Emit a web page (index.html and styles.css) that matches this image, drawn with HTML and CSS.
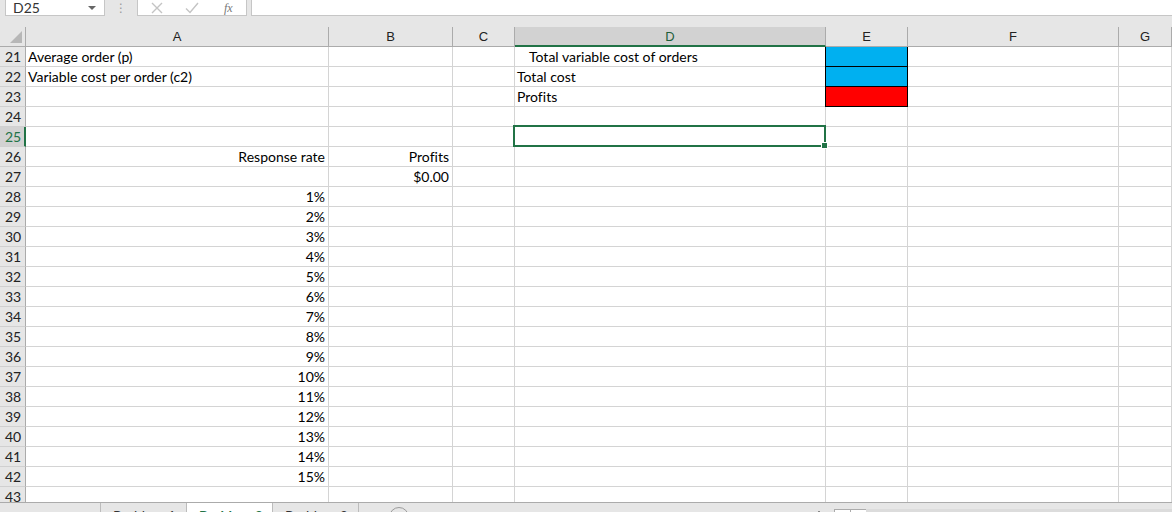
FILE: index.html
```html
<!DOCTYPE html>
<html>
<head>
<meta charset="utf-8">
<link rel="stylesheet" href="styles.css">
</head>
<body>
<div class="app">
  <div class="fbar">
    <div class="namebox"><span>D25</span><span class="caret"></span></div>
    <div class="dots">⋮</div>
    <div class="btnbox">
      <svg class="ic cancel" width="12" height="12" viewBox="0 0 12 12"><path d="M1 1 L11 11 M11 1 L1 11" stroke="#c4c4c4" stroke-width="1.4" fill="none"/></svg>
      <svg class="ic enter" width="14" height="12" viewBox="0 0 14 12"><path d="M1 6.5 L5 10.5 L13 1" stroke="#c4c4c4" stroke-width="1.4" fill="none"/></svg>
      <span class="fx">fx</span>
    </div>
    <div class="finput"></div>
  </div>
  <div class="sheet">
    <div class="grid">
      <div class="corner"><span class="tri"></span></div>
      <div class="ch">A</div><div class="ch">B</div><div class="ch">C</div><div class="ch sel">D</div><div class="ch">E</div><div class="ch">F</div><div class="ch">G</div>

      <div class="rh">21</div><div class="c">Average order (p)</div><div class="c"></div><div class="c"></div><div class="c ind">Total variable cost of orders</div><div class="c blue"></div><div class="c"></div><div class="c"></div>
      <div class="rh">22</div><div class="c">Variable cost per order (c2)</div><div class="c"></div><div class="c"></div><div class="c">Total cost</div><div class="c blue"></div><div class="c"></div><div class="c"></div>
      <div class="rh">23</div><div class="c"></div><div class="c"></div><div class="c"></div><div class="c">Profits</div><div class="c red"></div><div class="c"></div><div class="c"></div>
      <div class="rh">24</div><div class="c"></div><div class="c"></div><div class="c"></div><div class="c"></div><div class="c"></div><div class="c"></div><div class="c"></div>
      <div class="rh sel">25</div><div class="c"></div><div class="c"></div><div class="c"></div><div class="c active"></div><div class="c"></div><div class="c"></div><div class="c"></div>
      <div class="rh">26</div><div class="c r">Response rate</div><div class="c r">Profits</div><div class="c"></div><div class="c"></div><div class="c"></div><div class="c"></div><div class="c"></div>
      <div class="rh">27</div><div class="c"></div><div class="c r">$0.00</div><div class="c"></div><div class="c"></div><div class="c"></div><div class="c"></div><div class="c"></div>
      <div class="rh">28</div><div class="c r">1%</div><div class="c"></div><div class="c"></div><div class="c"></div><div class="c"></div><div class="c"></div><div class="c"></div>
      <div class="rh">29</div><div class="c r">2%</div><div class="c"></div><div class="c"></div><div class="c"></div><div class="c"></div><div class="c"></div><div class="c"></div>
      <div class="rh">30</div><div class="c r">3%</div><div class="c"></div><div class="c"></div><div class="c"></div><div class="c"></div><div class="c"></div><div class="c"></div>
      <div class="rh">31</div><div class="c r">4%</div><div class="c"></div><div class="c"></div><div class="c"></div><div class="c"></div><div class="c"></div><div class="c"></div>
      <div class="rh">32</div><div class="c r">5%</div><div class="c"></div><div class="c"></div><div class="c"></div><div class="c"></div><div class="c"></div><div class="c"></div>
      <div class="rh">33</div><div class="c r">6%</div><div class="c"></div><div class="c"></div><div class="c"></div><div class="c"></div><div class="c"></div><div class="c"></div>
      <div class="rh">34</div><div class="c r">7%</div><div class="c"></div><div class="c"></div><div class="c"></div><div class="c"></div><div class="c"></div><div class="c"></div>
      <div class="rh">35</div><div class="c r">8%</div><div class="c"></div><div class="c"></div><div class="c"></div><div class="c"></div><div class="c"></div><div class="c"></div>
      <div class="rh">36</div><div class="c r">9%</div><div class="c"></div><div class="c"></div><div class="c"></div><div class="c"></div><div class="c"></div><div class="c"></div>
      <div class="rh">37</div><div class="c r">10%</div><div class="c"></div><div class="c"></div><div class="c"></div><div class="c"></div><div class="c"></div><div class="c"></div>
      <div class="rh">38</div><div class="c r">11%</div><div class="c"></div><div class="c"></div><div class="c"></div><div class="c"></div><div class="c"></div><div class="c"></div>
      <div class="rh">39</div><div class="c r">12%</div><div class="c"></div><div class="c"></div><div class="c"></div><div class="c"></div><div class="c"></div><div class="c"></div>
      <div class="rh">40</div><div class="c r">13%</div><div class="c"></div><div class="c"></div><div class="c"></div><div class="c"></div><div class="c"></div><div class="c"></div>
      <div class="rh">41</div><div class="c r">14%</div><div class="c"></div><div class="c"></div><div class="c"></div><div class="c"></div><div class="c"></div><div class="c"></div>
      <div class="rh">42</div><div class="c r">15%</div><div class="c"></div><div class="c"></div><div class="c"></div><div class="c"></div><div class="c"></div><div class="c"></div>
      <div class="rh">43</div><div class="c"></div><div class="c"></div><div class="c"></div><div class="c"></div><div class="c"></div><div class="c"></div><div class="c"></div>
    </div>
  </div>
  <div class="tabbar">
    <div class="nav"></div>
    <div class="tab">Problem 1</div>
    <div class="tab on">Problem 2</div>
    <div class="tab">Problem 3</div>
    <div class="add"></div>
    <div class="spacer"></div>
    <div class="hdots"></div>
    <div class="sbtn"></div>
    <div class="sbtn"></div>
    <div class="track"></div>
  </div>
</div>
</body>
</html>
```
FILE: styles.css
```css
html, body {
  margin: 0;
  padding: 0;
  width: 1172px;
  height: 512px;
  overflow: hidden;
  background: #ffffff;
}
.app {
  width: 1172px;
  height: 512px;
  display: flex;
  flex-direction: column;
  font-family: "Lato", "Liberation Sans", sans-serif;
  font-variant-ligatures: none;
  color: #000;
}
.fbar {
  height: 27px;
  flex: none;
  background: #e6e6e6;
  display: flex;
  align-items: flex-start;
}
.namebox {
  margin-left: 5px;
  margin-top: -1px;
  width: 100px;
  height: 17px;
  border: 1px solid #c6c6c6;
  background: #fff;
  box-sizing: border-box;
  display: flex;
  align-items: center;
  justify-content: space-between;
  padding: 0 8px 0 7px;
  font-size: 14px;
  color: #333;
  font-family: "Lato", "Liberation Sans", sans-serif;
}
.caret {
  width: 0;
  height: 0;
  border-left: 4px solid transparent;
  border-right: 4px solid transparent;
  border-top: 4px solid #666;
}
.dots {
  width: 32px;
  text-align: center;
  color: #9a9a9a;
  font-size: 12px;
  line-height: 16px;
  font-family: "DejaVu Sans", sans-serif;
}
.btnbox {
  margin-top: -1px;
  width: 110px;
  height: 17px;
  box-sizing: border-box;
  border: 1px solid #c6c6c6;
  background: #fff;
  display: flex;
  align-items: center;
  padding-left: 13px;
}
.ic { flex: none; }
.cancel { margin-right: 22px; }
.enter { margin-right: 25px; }
.fx {
  font-family: "Liberation Serif", serif;
  font-style: italic;
  color: #777;
  font-size: 12px;
  line-height: 14px;
}
.finput {
  margin-left: 4px;
  margin-top: -1px;
  flex: 1;
  height: 17px;
  box-sizing: border-box;
  border: 1px solid #c6c6c6;
  border-right: none;
  background: #fff;
}
.sheet {
  height: 475px;
  flex: none;
  overflow: hidden;
}
.grid {
  display: grid;
  grid-template-columns: 26px 303px 124px 62px 311px 82px 211px 1fr;
  grid-auto-rows: 20px;
}
.grid > div {
  box-sizing: border-box;
}
.corner {
  background: #e6e6e6;
  border-right: 1px solid #ababab;
  border-bottom: 1px solid #ababab;
  position: relative;
}
.tri {
  position: absolute;
  right: 3px;
  bottom: 3px;
  width: 0;
  height: 0;
  border-left: 12px solid transparent;
  border-bottom: 12px solid #b7b7b7;
}
.ch {
  background: #e6e6e6;
  border-right: 1px solid #ababab;
  border-bottom: 1px solid #ababab;
  text-align: center;
  font-size: 13px;
  line-height: 20px;
  color: #222;
  font-family: "Liberation Sans", sans-serif;
}
.ch.sel {
  background: #d2d2d2;
  border-bottom: 2px solid #217346;
  color: #1d5e3a;
}
.rh {
  background: #e6e6e6;
  border-right: 1px solid #ababab;
  border-bottom: 1px solid #d0d0d0;
  font-size: 14px;
  line-height: 20px;
  padding-left: 5px;
  color: #222;
}
.rh.sel {
  background: #d2d2d2;
  border-right: 2px solid #217346;
  color: #217346;
}
.c {
  border-right: 1px solid #d4d4d4;
  border-bottom: 1px solid #d4d4d4;
  font-size: 14px;
  line-height: 20px;
  padding: 0 3px 0 2px;
  white-space: nowrap;
  overflow: visible;
}
.c.r { text-align: right; }
.c.ind { padding-left: 14px; }
.c.blue {
  background: #00b0f0;
  border: 1px solid #000;
  border-top: none;
  margin-left: -1px;
}
.c.red {
  background: #ff0000;
  border: 1px solid #000;
  border-top: none;
  margin-left: -1px;
}
.c.active {
  position: relative;
}
.c.active::after {
  content: "";
  position: absolute;
  left: -2px;
  top: -2px;
  right: -1px;
  bottom: -1px;
  border: 2px solid #217346;
}
.c.active::before {
  content: "";
  position: absolute;
  right: -3px;
  bottom: -3px;
  width: 5px;
  height: 5px;
  background: #217346;
  border: 1px solid #fff;
  z-index: 2;
}
.tabbar {
  flex: none;
  height: 10px;
  border-top: 1px solid #ababab;
  background: #e6e6e6;
  display: flex;
  align-items: flex-start;
  font-family: "Lato", "Liberation Sans", sans-serif;
  font-size: 14px;
  overflow: hidden;
}
.nav { width: 100px; height: 30px; border-right: 1px solid #bcbcbc; }
.tab {
  width: 86px;
  height: 30px;
  box-sizing: border-box;
  border-right: 1px solid #bcbcbc;
  padding-top: 4px;
  padding-left: 12px;
  color: #333;
}
.tab.on {
  background: #fff;
  color: #217346;
  font-weight: bold;
}
.add {
  margin-left: 30px;
  margin-top: 4px;
  width: 20px;
  height: 20px;
  border: 1px solid #9a9a9a;
  border-radius: 50%;
  box-sizing: border-box;
}
.spacer { flex: 1; }
.hdots {
  width: 2px;
  height: 2px;
  background: #888;
  margin-top: 8px;
  margin-right: 14px;
}
.sbtn {
  width: 15px;
  height: 20px;
  margin-top: 6px;
  border: 1px solid #ababab;
  background: #fff;
  margin-right: -1px;
}
.track {
  width: 306px;
  height: 20px;
  margin-top: 6px;
  background: #dcdcdc;
}
```
